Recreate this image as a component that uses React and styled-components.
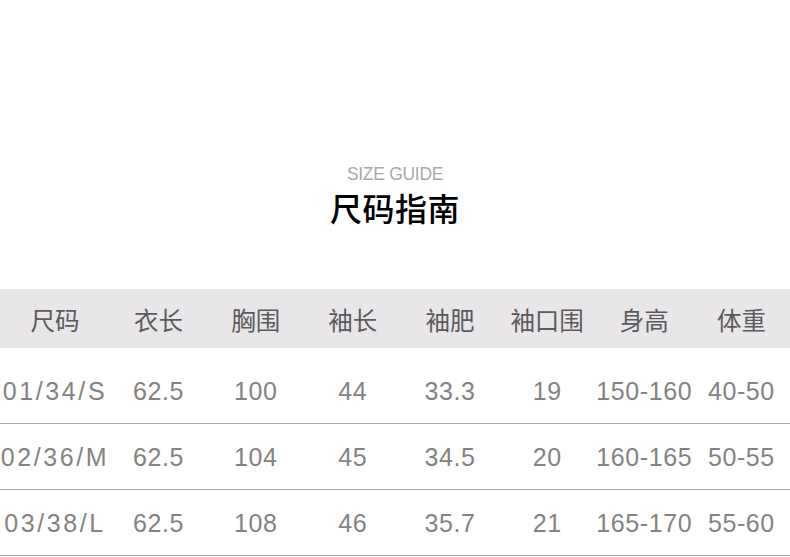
import React from "react";
import styled, { createGlobalStyle } from "styled-components";

const GlobalStyle = createGlobalStyle`
  html, body {
    margin: 0;
    padding: 0;
    background: #fff;
  }
  body {
    font-family: "Liberation Sans", "Noto Sans CJK SC", sans-serif;
  }
`;

const Page = styled.div`
  width: 790px;
  padding-top: 164px;
`;

const Heading = styled.div`
  display: flex;
  flex-direction: column;
  align-items: center;
`;

const SubTitle = styled.p`
  margin: 0;
  font-family: "Liberation Sans", sans-serif;
  font-size: 17.5px;
  line-height: 20px;
  color: #a9a9a9;
  letter-spacing: -0.3px;
`;

const Title = styled.h2`
  margin: 4px 0 0;
  font-family: "Noto Sans CJK SC", sans-serif;
  font-size: 32px;
  font-weight: 500;
  line-height: 38px;
  color: #000;
  letter-spacing: 0.5px;
`;

const Table = styled.div`
  margin-top: 63px;
`;

const Row = styled.div`
  display: grid;
  grid-template-columns: 110px repeat(7, 1fr);
  align-items: center;
  height: ${(p) => (p.$head ? "59px" : "65px")};
  background: ${(p) => (p.$head ? "#e8e6e9" : "transparent")};
  border-bottom: ${(p) => (p.$head ? "none" : "1px solid #a6a6a6")};
  margin-bottom: ${(p) => (p.$head ? "10px" : "0")};
`;

const HeadCell = styled.div`
  text-align: center;
  font-family: "Noto Sans CJK SC", sans-serif;
  font-size: 24.5px;
  color: #5b5b5b;
  padding-top: 2px;
  white-space: nowrap;
`;

const Cell = styled.div`
  text-align: center;
  font-family: "Liberation Sans", sans-serif;
  font-size: 25px;
  color: #838383;
  white-space: nowrap;
  letter-spacing: ${(p) => (p.$wide ? "2.6px" : "0.6px")};
  padding-top: 1px;
`;

const headers = ["尺码", "衣长", "胸围", "袖长", "袖肥", "袖口围", "身高", "体重"];

const rows = [
  ["01/34/S", "62.5", "100", "44", "33.3", "19", "150-160", "40-50"],
  ["02/36/M", "62.5", "104", "45", "34.5", "20", "160-165", "50-55"],
  ["03/38/L", "62.5", "108", "46", "35.7", "21", "165-170", "55-60"],
];

export default function App() {
  return (
    <Page>
      <GlobalStyle />
      <Heading>
        <SubTitle>SIZE GUIDE</SubTitle>
        <Title>尺码指南</Title>
      </Heading>
      <Table>
        <Row $head>
          {headers.map((h) => (
            <HeadCell key={h}>{h}</HeadCell>
          ))}
        </Row>
        {rows.map((r) => (
          <Row key={r[0]}>
            {r.map((v, i) => (
              <Cell key={i} $wide={i === 0}>
                {v}
              </Cell>
            ))}
          </Row>
        ))}
      </Table>
    </Page>
  );
}
